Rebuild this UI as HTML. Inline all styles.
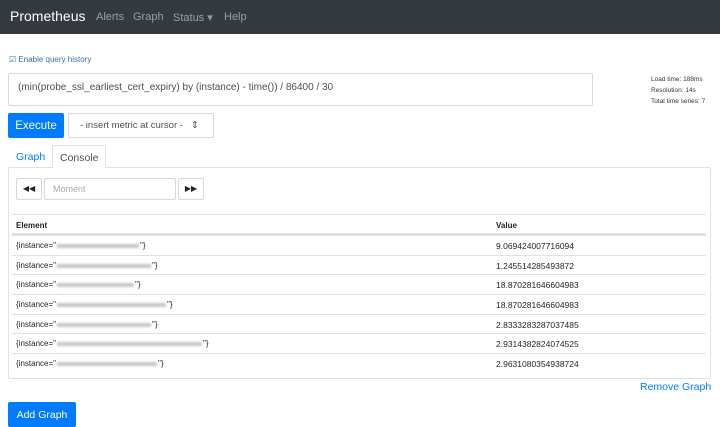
<!DOCTYPE html>
<html><head><style>
*{box-sizing:border-box;margin:0;padding:0}
body{width:720px;height:427px;overflow:hidden;background:#fff;font-family:"Liberation Sans",sans-serif;color:#212529;position:relative}
.a{position:absolute}
.nav{left:0;top:0;width:720px;height:34px;background:#343a40}
.nav span{position:absolute;top:11px;font-size:11px;color:rgba(255,255,255,.5)}
.btn{background:#007bff;color:#fff;font-size:11.5px;display:flex;align-items:center;justify-content:center;border-radius:2px}
.box{border:1px solid #d6d9dc;border-radius:2px;background:#fff}
.row{position:absolute;left:12px;width:694px;height:20px;border-top:1px solid #dee2e6;font-size:8px}
.row .e{position:absolute;left:4px;top:5px}
.row .v{position:absolute;left:484px;top:5px;font-size:8.5px}
.bl{display:inline-block;height:4px;background:#c8c8c8;vertical-align:middle;filter:blur(1px);margin:0 1px}
</style></head><body>
<div class="a nav">
<span style="left:10px;top:8px;font-size:14px;color:#fff">Prometheus</span>
<span style="left:96px">Alerts</span><span style="left:133px">Graph</span><span style="left:173px">Status ▾</span><span style="left:224px">Help</span>
</div>
<div class="a" style="left:9px;top:55px;font-size:8px;color:#3b6fa8">☑ Enable query history</div>
<div class="a box" style="left:8px;top:73px;width:585px;height:33px;font-size:10px;padding:8px 0 0 9px;color:#495057">(min(probe_ssl_earliest_cert_expiry) by (instance) - time()) / 86400 / 30</div>
<div class="a" style="left:651px;top:74px;font-size:6.5px;line-height:11px;color:#333">Load time: 188ms<br>Resolution: 14s<br>Total time series: 7</div>
<div class="a btn" style="left:8px;top:113px;width:56px;height:25px">Execute</div>
<div class="a box" style="left:68px;top:113px;width:146px;height:25px;font-size:9.5px;line-height:23px;padding-left:11px;color:#495057">- insert metric at cursor - &nbsp;&nbsp;⇕</div>
<div class="a" style="left:16px;top:151px;font-size:10.5px;color:#007bff">Graph</div>
<div class="a" style="left:52px;top:145px;width:54px;height:23px;border:1px solid #dee2e6;border-bottom:none;background:#fff;font-size:10.5px;padding:6px 0 0 7px;z-index:2;color:#495057">Console</div>
<div class="a" style="left:8px;top:167px;width:703px;height:212px;border:1px solid #dee2e6;border-radius:2px"></div>
<div class="a box" style="left:16px;top:178px;width:26px;height:22px;font-size:8px;text-align:center;line-height:20px">◀◀</div>
<div class="a box" style="left:44px;top:178px;width:132px;height:22px;font-size:9px;color:#aaa;padding:5px 0 0 8px">Moment</div>
<div class="a box" style="left:178px;top:178px;width:26px;height:22px;font-size:8px;text-align:center;line-height:20px">▶▶</div>
<div class="row" style="top:214px;height:21px;border-bottom:2px solid #dee2e6;font-weight:bold"><span class="e" style="top:6px">Element</span><span class="v" style="top:6px;font-size:8px">Value</span></div>
<div class="row" style="top:235px"><span class="e">{instance="<i class="bl" style="width:82px"></i>"}</span><span class="v">9.069424007716094</span></div>
<div class="row" style="top:255px"><span class="e">{instance="<i class="bl" style="width:94px"></i>"}</span><span class="v">1.245514285493872</span></div>
<div class="row" style="top:274px"><span class="e">{instance="<i class="bl" style="width:77px"></i>"}</span><span class="v">18.870281646604983</span></div>
<div class="row" style="top:294px"><span class="e">{instance="<i class="bl" style="width:109px"></i>"}</span><span class="v">18.870281646604983</span></div>
<div class="row" style="top:314px"><span class="e">{instance="<i class="bl" style="width:94px"></i>"}</span><span class="v">2.8333283287037485</span></div>
<div class="row" style="top:333px"><span class="e">{instance="<i class="bl" style="width:145px"></i>"}</span><span class="v">2.9314382824074525</span></div>
<div class="row" style="top:353px"><span class="e">{instance="<i class="bl" style="width:100px"></i>"}</span><span class="v">2.9631080354938724</span></div>
<div class="a" style="left:640px;top:381px;font-size:10.5px;color:#007bff">Remove Graph</div>
<div class="a btn" style="left:8px;top:402px;width:68px;height:25px;font-size:10.5px">Add Graph</div>
</body></html>
